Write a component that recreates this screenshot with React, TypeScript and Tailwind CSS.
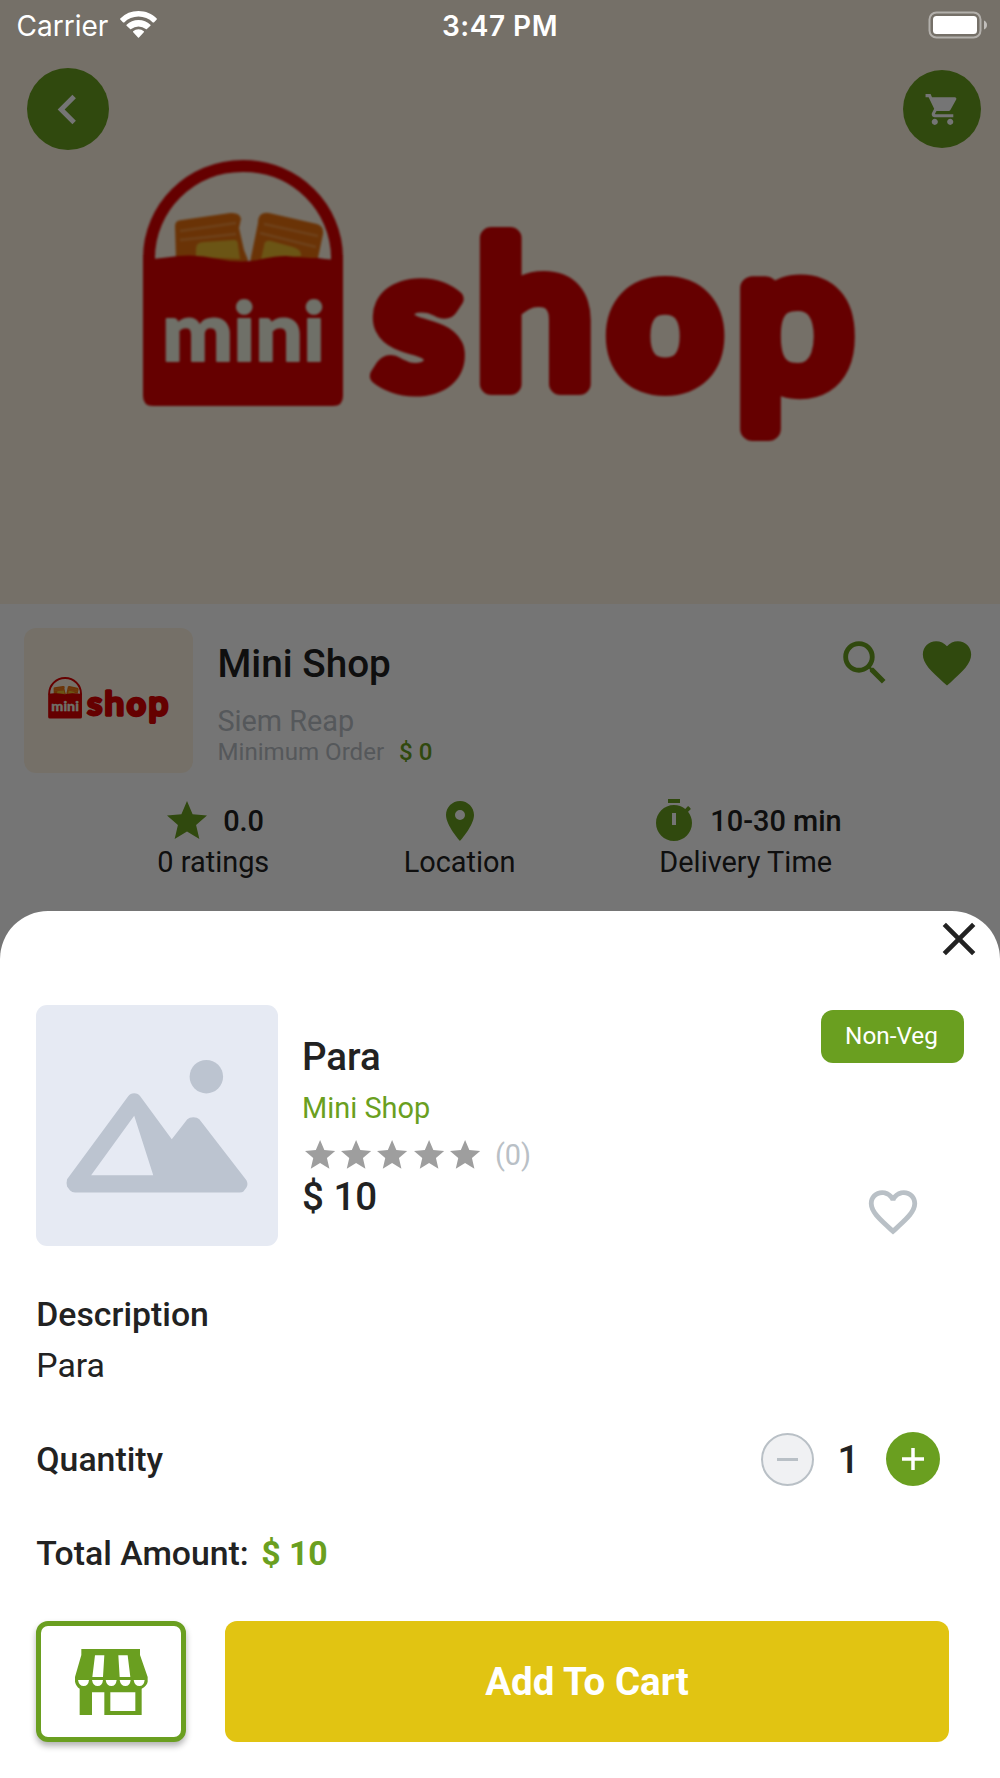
import { useState } from "react";
import type { ReactNode } from "react";
import {
  MdChevronLeft,
  MdClose,
  MdFavorite,
  MdFavoriteBorder,
  MdLocationOn,
  MdSearch,
  MdShoppingCart,
  MdStar,
} from "react-icons/md";

const PRICE = 10;

function StatusBar() {
  return (
    <div className="absolute inset-x-0 top-0 z-20 grid h-[51px] grid-cols-3 items-center px-[15px] font-['Inter',sans-serif] text-[28px] text-white">
      <div className="flex items-center gap-[12px] pl-[1.500px]">
        <span>Carrier</span>
        <svg className="-mt-[3px] h-[27px] w-[37px]" viewBox="0 0 37 27" fill="#fff">
          <path d="M18.5 0C25.5 0 32 2.7 36.700 7.400q.5.6 0 1.100L33.900 11.400q-.5.400-1.100 0A20.500 20.500 0 0 0 4.200 11.400q-.6.400-1.100 0L.3 8.500q-.5-.5 0-1.100A26 26 0 0 1 18.500 0z" />
          <path d="M18.500 9c4.600 0 8.800 1.800 11.900 4.700q.6.5 0 1.100l-3.500 3.300q-.5.400-1.100 0a11.300 11.300 0 0 0-14.600 0q-.6.400-1.100 0l-3.500-3.300q-.6-.6 0-1.100C9.700 10.800 13.900 9 18.500 9z" />
          <path d="M18.500 18.300c2 0 3.900.8 5.300 2q.5.500 0 1L19 26.600q-.5.500-1 0l-4.800-5.300q-.5-.5 0-1c1.400-1.200 3.300-2 5.300-2z" />
        </svg>
      </div>
      <div className="text-center font-semibold tracking-[0.5px] whitespace-nowrap">3:47 PM</div>
      <div className="-mr-0.5 flex justify-end">
        <svg className="-mt-0.5 h-[28px] w-[59px]" viewBox="0 0 59 28">
          <rect x="1.500" y="1.500" width="51" height="25" rx="7" fill="none" stroke="#fff" strokeOpacity=".45" strokeWidth="2" />
          <rect x="5" y="5" width="44" height="18" rx="3.500" fill="#fff" />
          <path d="M56 9.500q3 1.500 3 4.500t-3 4.500z" fill="#fff" fillOpacity=".55" />
        </svg>
      </div>
    </div>
  );
}

function ShopLogo({ className }: { className?: string }) {
  return (
    <svg className={className} viewBox="0 0 1000 604">
      <path d="M149 264V258C149 208 190 166 243 166S337 208 337 258V264" fill="none" stroke="#dc0000" strokeWidth="12" />
      <path d="M175 226q0-6 7-6l48-7q10-1 11 6l-2 9 5 22 4 10-2 5-70-4z" fill="#e8700f" />
      <path d="M258 223q0-12 11-10l48 11q7 2 6 10l-5 24-68 4z" fill="#e8700f" />
      <path d="M180 231l56-8M180 240l56-6M264 224l54 12M260 233l56 14" stroke="#f08f3a" strokeWidth="2.500" />
      <path d="M196 249q0-7 8-7l30-2q4 0 4 5l2 14-44-2zM264 246q0-6 7-5l22 6q9 3 8 9l-40 3z" fill="#eab92e" />
      <path d="M143 260q20-2 35-4 20-2 40 3 24 5 44 0 14-3 24-3 18 2 32 2 14 2 25 2V396q0 10-10 10H153q-10 0-10-10z" fill="#dc0000" />
      <g fontFamily="Lato, sans-serif" strokeLinejoin="round">
        <text x="162" y="360.500" fontSize="82" fontWeight="900" fill="#f2f4e2" stroke="#f2f4e2" strokeWidth="2" textLength="163" lengthAdjust="spacingAndGlyphs">
          mini
        </text>
        <text transform="scale(1.05 1)" y="384" fontSize="190" fill="#dc0000" stroke="#dc0000" strokeWidth="22">
          <tspan x="356" y="386" fontSize="192" fontWeight="700" strokeWidth="17">s</tspan>
          <tspan x="454" y="384" fontSize="198">h</tspan>
          <tspan x="582.500" y="382.500" fontSize="180" strokeWidth="26">o</tspan>
          <tspan x="701.500" y="386" fontSize="181" fontFamily="Open Sans, sans-serif" strokeWidth="24">p</tspan>
        </text>
      </g>
    </svg>
  );
}

function TimerIcon() {
  return (
    <svg className="size-12" viewBox="0 0 24 24" fill="currentColor">
      <path d="M15 1H9v2h6zm4.030 6.390 1.420-1.420c-.43-.51-.9-.99-1.410-1.410l-1.420 1.420C16.070 4.740 14.120 4 12 4c-4.970 0-9 4.030-9 9s4.020 9 9 9 9-4.030 9-9c0-2.120-.74-4.070-1.970-5.610M13 14h-2V8h2z" />
    </svg>
  );
}

function StoreIcon() {
  return (
    <svg className="mt-px h-[66px] w-[73px]" viewBox="0 0 219 198">
      <path
        fill="#6a9f20"
        fillRule="evenodd"
        d="M19 0H195V18L218 84V98Q216 110 200 119V198H14V119Q3 112 0 98V84L19 18ZM60 19 52 84H84L88 19ZM130 19 134 84H166L158 19ZM51 130V198H88V130ZM106 130V186H181V130Z"
      />
      <path
        fill="#fff"
        d="M9 93h33q-2 18-16 18T9 93zM51 93h33q-2 18-16 18T51 93zM92 93h33q-2 18-16 18T92 93zM134 93h33q-2 18-16 18T134 93zM176 93h33q-2 18-16 18T176 93z"
      />
    </svg>
  );
}

function PlaceholderImage() {
  return (
    <svg className="size-[241.500px] shrink-0 rounded-[11px] bg-[#e6eaf3]" viewBox="0 0 241 241" fill="#bcc4d0">
      <circle cx="170" cy="71.500" r="16.700" />
      <path
        fillRule="evenodd"
        d="M92 91Q94 88 98 88T104 91L135.500 134 151 114Q153 112 157 112T163 114L210 175Q212 179 210 182L207 186Q206 187 203 187H39Q36 187 34 185L31 181Q30 178 31 174ZM98 110.500 55 170H117Z"
      />
    </svg>
  );
}

function Stat({ icon, value, label }: { icon: ReactNode; value?: string; label: string }) {
  return (
    <div className="flex flex-col items-center">
      <div className="flex h-12 items-center gap-[12.500px] text-[#6a9f20]">
        {icon}
        {value && <span className="pt-0.5 font-medium text-[#222]">{value}</span>}
      </div>
      <div className="leading-[34px]">{label}</div>
    </div>
  );
}

function ShopPage() {
  return (
    <div>
      <div className="relative h-[604px] bg-[#fff5e3]">
        <ShopLogo className="absolute inset-0 h-full w-full blur-[1px]" />
        <div className="relative flex items-center justify-between pt-[68px] pr-[19px] pl-[27px] text-white">
          <button className="flex size-[82px] items-center justify-center rounded-full bg-[#6a9f20]">
            <MdChevronLeft className="mr-px size-[59px]" />
          </button>
          <button className="flex size-[78px] items-center justify-center rounded-full bg-[#6a9f20]">
            <MdShoppingCart className="size-[37px]" />
          </button>
        </div>
      </div>

      <div className="flex pt-6 pr-6 pl-6">
        <div className="flex h-[145px] w-[169px] items-center rounded-[12px] bg-[#fff5e3]">
          <ShopLogo className="mt-px w-full" />
        </div>
        <div className="ml-[24.500px] flex-1 text-[#b9c0c6]">
          <div className="text-[38.700px] leading-[71px] font-medium text-[#222]">Mini Shop</div>
          <div className="mt-[7px] text-[28.800px] leading-[30px]">Siem Reap</div>
          <div className="text-[24.100px] leading-8">
            Minimum Order <span className="ml-[9px] font-medium text-[#6a9f20]">$ 0</span>
          </div>
        </div>
        <div className="mt-[6px] flex gap-6 text-[#6a9f20]">
          <MdSearch className="size-[58px]" />
          <MdFavorite className="size-[58px]" />
        </div>
      </div>

      <div className="mt-6 flex justify-evenly pr-6 pl-[23px] text-[28.900px]">
        <Stat icon={<MdStar className="size-12" />} value="0.0" label="0 ratings" />
        <Stat icon={<MdLocationOn className="size-12" />} label="Location" />
        <Stat icon={<TimerIcon />} value="10-30 min" label="Delivery Time" />
      </div>
    </div>
  );
}

function ItemSheet() {
  const [quantity, setQuantity] = useState(1);
  const [liked, setLiked] = useState(false);

  return (
    <div className="absolute inset-x-0 top-[910.600px] bottom-0 z-10 rounded-t-[48px] bg-white">
      <div className="flex justify-end pr-[13px]">
        <button>
          <MdClose className="size-14" />
        </button>
      </div>

      <div className="mt-[38px] flex pr-9 pl-[36.300px]">
        <PlaceholderImage />
        <div className="ml-[24.200px] flex-1">
          <div className="mt-[31px] text-[38.500px] leading-[41px] font-medium">Para</div>
          <div className="mt-[11px] text-[28.900px] leading-[40px] text-[#6a9f20]">Mini Shop</div>
          <div className="mt-[9px] flex h-[37px] items-center">
            <div className="flex text-[#9e9e9e]">
              {[0, 1, 2, 3, 4].map((i) => (
                <MdStar key={i} className="size-[36.200px]" />
              ))}
            </div>
            <span className="ml-[12px] pt-px text-[28.900px] text-[#b9c0c6]">(0)</span>
          </div>
          <div className="text-[38.500px] leading-[45px] font-medium">$ {PRICE}</div>
        </div>
        <div className="flex flex-col items-center pt-[5px]">
          <div className="h-[53px] w-[143px] rounded-[12px] bg-[#6a9f20] pr-0.5 text-center text-[24.300px] leading-[51px] text-white">
            Non-Veg
          </div>
          <button className="mt-[120px] text-[#b9c0c6]" onClick={() => setLiked(!liked)}>
            {liked ? <MdFavorite className="size-[58px]" /> : <MdFavoriteBorder className="size-[58px]" />}
          </button>
        </div>
      </div>

      <div className="pr-9 pl-[36.300px] text-[33.800px]">
        <div className="mt-[48px] leading-[42px] font-medium">Description</div>
        <div className="mt-[9px] leading-[42px]">Para</div>

        <div className="mt-[45px] flex h-[54px] items-center justify-between pr-[24px]">
          <span className="pt-0.5 font-medium">Quantity</span>
          <div className="flex items-center">
            <button
              className="flex size-[53px] items-center justify-center rounded-full border-2 border-[#b9c0c6] bg-[#f0f1f3]"
              onClick={() => setQuantity(Math.max(1, quantity - 1))}
            >
              <span className="h-[3px] w-[21px] bg-[#b9c0c6]" />
            </button>
            <span className="w-[72px] pt-px pr-[3px] text-center text-[38.500px] leading-[54px] font-medium">{quantity}</span>
            <button
              className="flex size-[54px] items-center justify-center rounded-full bg-[#6a9f20]"
              onClick={() => setQuantity(quantity + 1)}
            >
              <svg className="size-[22px]" viewBox="0 0 22 22" stroke="#fff" strokeWidth="3.500">
                <path d="M11 0V22M0 11H22" />
              </svg>
            </button>
          </div>
        </div>

        <div className="mt-[47px] leading-[42px] font-medium">
          Total Amount: <span className="ml-1 font-bold text-[#6a9f20]">$ {PRICE * quantity}</span>
        </div>

        <div className="mt-[46px] flex gap-[39px] pr-[15px]">
          <button className="flex h-[121px] w-[149.700px] items-center justify-center rounded-[12px] border-5 border-[#6a9f20] bg-white shadow-[0_4px_6px_rgba(0,0,0,0.3)]">
            <StoreIcon />
          </button>
          <button className="h-[121px] flex-1 rounded-[12px] bg-[#e1c412] text-[38.500px] font-bold text-white">
            Add To Cart
          </button>
        </div>
      </div>
    </div>
  );
}

export default function App() {
  return (
    <main className="relative h-[1778px] w-[1000px] overflow-hidden bg-white font-['Roboto',sans-serif] text-[#222]">
      <StatusBar />
      <ShopPage />
      <div className="absolute inset-0 bg-black/54" />
      <ItemSheet />
    </main>
  );
}
